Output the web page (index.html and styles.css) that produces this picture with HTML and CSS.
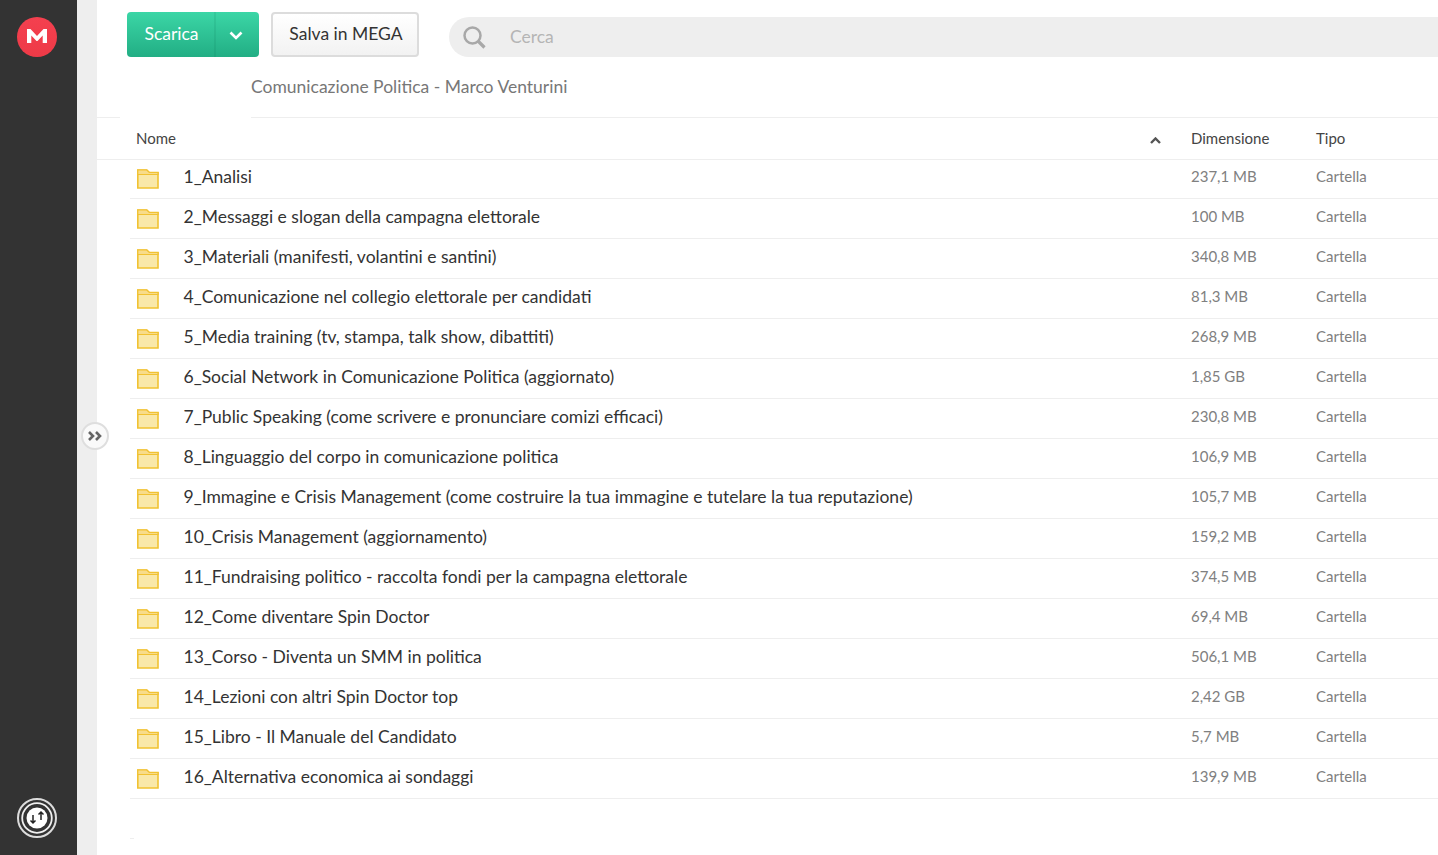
FILE: index.html
```html
<!DOCTYPE html>
<html lang="it">
<head>
<meta charset="utf-8">
<title>Comunicazione Politica - Marco Venturini</title>
<link rel="stylesheet" href="styles.css">
</head>
<body>
<aside class="sidebar">
  <div class="logo">
    <svg width="40" height="40" viewBox="0 0 40 40"><defs><linearGradient id="lg" x1="0" y1="0" x2="0" y2="1"><stop offset="0" stop-color="#f4404f"/><stop offset="1" stop-color="#ee3a47"/></linearGradient></defs><circle cx="20" cy="20" r="20" fill="url(#lg)"/><path d="M10 26V12h3.500l6.500 7 6.500-7H30v14h-4.300v-7.500L20.500 24h-1l-5.200-5.500V26z" fill="#fff"/></svg>
  </div>
  <div class="transfer">
    <svg width="40" height="40" viewBox="0 0 40 40"><circle cx="20" cy="20" r="19" fill="none" stroke="#dcdcdc" stroke-width="2"/><circle cx="20" cy="20" r="14.800" fill="none" stroke="#f0f0f0" stroke-width="1.800"/><circle cx="20" cy="20" r="10.500" fill="#fff"/><path d="M16 17v8M13.500 22.500l2.500 2.500 2.500-2.500M24 22v-8M21.500 16.500l2.500-2.500 2.500 2.500" fill="none" stroke="#222" stroke-width="1.500"/></svg>
  </div>
</aside>
<div class="gutter">
  <button class="expand" aria-label="Espandi">
    <svg width="14" height="10" viewBox="0 0 14 10"><path d="M1 1l4 4-4 4M8 1l4 4-4 4" fill="none" stroke="#666" stroke-width="2.600"/></svg>
  </button>
</div>
<main class="main">
  <div class="top">
    <div class="toolbar">
      <div class="download">
        <span class="download-label">Scarica</span>
        <span class="download-arrow">
          <svg width="14" height="9" viewBox="0 0 14 9"><path d="M1.500 1.500L7 7l5.500-5.500" fill="none" stroke="#fff" stroke-width="2.600"/></svg>
        </span>
      </div>
      <div class="save">Salva in MEGA</div>
      <div class="search">
        <svg class="search-icon" width="23" height="23" viewBox="0 0 23 23"><circle cx="9.500" cy="9.500" r="8" fill="none" stroke="#a8a8a8" stroke-width="2.500"/><path d="M15 15l6.500 6.500" stroke="#a8a8a8" stroke-width="3.200"/></svg>
        <span class="search-text">Cerca</span>
      </div>
    </div>
    <div class="path">Comunicazione Politica - Marco Venturini</div>
    <div class="path-mask"></div>
  </div>
  <div class="head">
    <span class="name">Nome</span>
    <svg class="sort" width="11" height="7" viewBox="0 0 11 7"><path d="M1 6l4.500-4.500L10 6" fill="none" stroke="#555" stroke-width="2.400"/></svg>
    <span class="size">Dimensione</span>
    <span class="type">Tipo</span>
  </div>
  <div class="rows" id="rows"></div>
  <div class="tail"></div>
</main>
<script src="app.js"></script>
</body>
</html>
```
FILE: app.js
```js
var data = [
  ["1_Analisi", "237,1 MB"],
  ["2_Messaggi e slogan della campagna elettorale", "100 MB"],
  ["3_Materiali (manifesti, volantini e santini)", "340,8 MB"],
  ["4_Comunicazione nel collegio elettorale per candidati", "81,3 MB"],
  ["5_Media training (tv, stampa, talk show, dibattiti)", "268,9 MB"],
  ["6_Social Network in Comunicazione Politica (aggiornato)", "1,85 GB"],
  ["7_Public Speaking (come scrivere e pronunciare comizi efficaci)", "230,8 MB"],
  ["8_Linguaggio del corpo in comunicazione politica", "106,9 MB"],
  ["9_Immagine e Crisis Management (come costruire la tua immagine e tutelare la tua reputazione)", "105,7 MB"],
  ["10_Crisis Management (aggiornamento)", "159,2 MB"],
  ["11_Fundraising politico - raccolta fondi per la campagna elettorale", "374,5 MB"],
  ["12_Come diventare Spin Doctor", "69,4 MB"],
  ["13_Corso - Diventa un SMM in politica", "506,1 MB"],
  ["14_Lezioni con altri Spin Doctor top", "2,42 GB"],
  ["15_Libro - Il Manuale del Candidato", "5,7 MB"],
  ["16_Alternativa economica ai sondaggi", "139,9 MB"]
];
var icon = '<svg class="folder" width="23" height="20" viewBox="0 0 23 20"><path d="M1.800 19V1h9L13.300 3.500H22V19z" fill="#f9e8a9" stroke="#f1c232" stroke-width="1.600"/><path d="M1.800 1h9L13.300 3.500H22V5.500H1.800z" fill="#f8dc8a" stroke="#f1c232" stroke-width="1.200"/></svg>';
document.getElementById("rows").innerHTML = data.map(function (r) {
  return '<div class="row">' + icon +
    '<span class="row-name">' + r[0] + '</span>' +
    '<span class="row-size">' + r[1] + '</span>' +
    '<span class="row-type">Cartella</span></div>';
}).join("");
```
FILE: styles.css
```css
* { box-sizing: border-box; }
html, body { height: 100%; }
body {
  margin: 0;
  display: flex;
  height: 855px;
  overflow: hidden;
  background: #fff;
  font-family: Lato, "Open Sans", sans-serif;
  color: #333;
}
.sidebar {
  width: 77px;
  flex: none;
  background: #333;
  display: flex;
  flex-direction: column;
  align-items: center;
  justify-content: space-between;
  padding: 17px 3px 17px 0;
}
.logo, .transfer { width: 40px; height: 40px; }
.logo svg, .transfer svg { display: block; }
.gutter {
  width: 20px;
  flex: none;
  background: #eee;
  position: relative;
}
.expand {
  position: absolute;
  left: 4px;
  top: 422px;
  width: 28px;
  height: 28px;
  padding: 0;
  border-radius: 50%;
  border: 2px solid #dedede;
  background: #fafafa;
  display: flex;
  align-items: center;
  justify-content: center;
  z-index: 2;
}
.main { flex: 1; min-width: 0; }
.top {
  height: 118px;
  position: relative;
  border-bottom: 1px solid #eee;
}
.toolbar {
  display: flex;
  align-items: flex-start;
  padding: 12px 0 0 30px;
}
.download {
  width: 132px;
  height: 45px;
  display: flex;
  border-radius: 4px;
  color: #fff;
  background: linear-gradient(#3bd6a6, #22ae84);
  overflow: hidden;
}
.download-label {
  width: 89px;
  font-size: 17.500px;
  line-height: 43px;
  text-align: center;
  padding-left: 2px;
  border-right: 2px solid rgba(0, 100, 70, .1);
}
.download-arrow {
  flex: 1;
  display: flex;
  align-items: center;
  justify-content: center;
  padding: 2px 4px 0 0;
}
.save {
  width: 148px;
  height: 45px;
  margin-left: 12px;
  padding-left: 2px;
  border: 2px solid #dcdcdc;
  border-radius: 4px;
  background: linear-gradient(#fff, #f2f2f2);
  font-size: 17.500px;
  line-height: 39px;
  text-align: center;
  color: #333;
}
.search {
  flex: 1;
  height: 40px;
  margin: 5px 0 0 30px;
  background: #eee;
  border-radius: 20px 0 0 20px;
  display: flex;
  align-items: center;
  padding-left: 14px;
}
.search-icon { flex: none; }
.search-text {
  margin-left: 24px;
  padding-bottom: 2px;
  font-size: 17.500px;
  color: #b5b5b5;
}
.path {
  margin: 19px 0 0 154px;
  font-size: 17.500px;
  line-height: 22px;
  color: #777;
}
.path-mask {
  position: absolute;
  left: 23px;
  bottom: -1px;
  width: 131px;
  height: 1px;
  background: #fff;
}
.head {
  height: 42px;
  display: flex;
  align-items: center;
  padding-left: 39px;
  border-bottom: 1px solid #eee;
  font-size: 15px;
  color: #444;
}
.name { flex: 1; }
.name, .size, .type { padding-bottom: 2px; }
.sort { margin: 4px 30px 0 0; }
.size { width: 125px; }
.type { width: 122px; }
.rows { margin-left: 33px; }
.row {
  height: 40px;
  display: flex;
  align-items: center;
  border-bottom: 1px solid #eee;
}
.row:first-child { height: 39px; }
.folder { margin-left: 6px; flex: none; }
.row-name {
  flex: 1;
  margin-left: 24.500px;
  padding-bottom: 4px;
  font-size: 17.500px;
  color: #333;
  white-space: nowrap;
}
.row:first-child .row-name { padding-bottom: 6px; }
.row-size, .row-type { padding-bottom: 6px; font-size: 15px; color: #808080; }
.row-size { width: 125px; }
.row-type { width: 122px; }
.tail {
  width: 4px;
  height: 1px;
  margin: 39px 0 0 33px;
  background: #eee;
}
```
